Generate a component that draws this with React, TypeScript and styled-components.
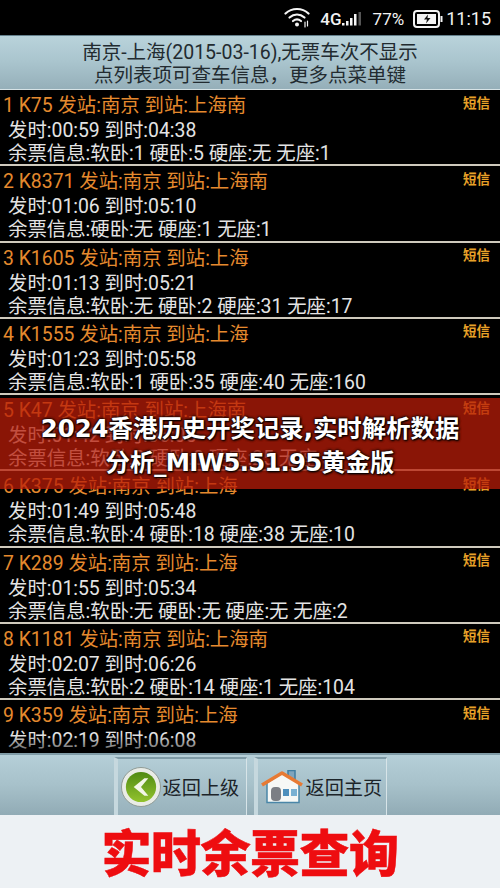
import React from "react";
import styled, { createGlobalStyle } from "styled-components";

const Global = createGlobalStyle`
  html, body { margin: 0; padding: 0; background: #000; }
  #root { width: 500px; height: 888px; overflow: hidden; }
`;
const CJK = `"Roboto", "Noto Sans CJK SC", sans-serif`;

const Page = styled.div`
  position: relative; width: 500px; height: 888px; display: flex; flex-direction: column;
  background: #000; font-family: ${CJK}; overflow: hidden;
`;
const StatusBar = styled.div`
  height: 35px; flex: none; background: #000; color: #f2f2f2; display: flex; align-items: center;
  justify-content: flex-end; padding: 2px 9px 0 0; font-size: 16px; box-sizing: border-box;
`;
const WifiSlot = styled.span`display: flex; margin-top: -3px;`;
const Net = styled.span`font-weight: 500; font-size: 17px; margin-left: 9px; letter-spacing: 0;`;
const Pct = styled.span`margin-left: 10px; margin-right: 9px; font-size: 17px;`;
const Clock = styled.span`font-size: 18px; margin-left: 3px;`;
const Header = styled.div`
  height: 55px; flex: none; box-sizing: border-box; padding-top: 5px; text-align: center; color: #222b30;
  font-size: 19.5px; line-height: 23px;
  background: linear-gradient(180deg, #b9d3db 0%, #a9c4cd 50%, #95afb9 100%);
  border-top: 1px solid #64808c; border-bottom: 1px solid #d7e3e6;
`;
const HeaderLine = styled.div`white-space: nowrap;`;
const List = styled.div`flex: 1; min-height: 0; overflow: hidden; position: relative;
  &::after { content: ""; position: absolute; left: 0; right: 0; bottom: 0; height: 18px;
    background: linear-gradient(180deg, rgba(0,0,0,0), rgba(0,0,0,.65)); }
`;
const Row = styled.div`
  height: 76.25px; box-sizing: border-box; border-bottom: 2px solid #cfcabd; background: #000;
`;
const Title = styled.div`
  display: flex; justify-content: space-between; align-items: center; height: 27px; margin-bottom: 2px; padding: 0 10px 0 3px;
  color: #e58a2e; font-size: 19.4px; white-space: nowrap;
`;
const Sms = styled.span`color: #e8a128; font-size: 13.500px; font-weight: 700; margin-top: -4px;`;
const Info = styled.div`
  color: #e4e4e4; font-size: 19.4px; line-height: 23px; padding-left: 8px; white-space: nowrap;
`;
const Footer = styled.div`
  height: 62px; flex: none; box-sizing: border-box; display: flex; justify-content: center; gap: 7px; padding: 2px 0 0 0;
  background: linear-gradient(180deg, #b5cfd8 0%, #a7c1ca 50%, #91abb5 100%);
  border-top: 2px solid #7f9ba6;
`;
const NavButton = styled.div`
  width: 133px; height: 58px; box-sizing: border-box; display: flex; align-items: center; gap: 2px; padding-left: 3px;
  border: 1px solid #d7e4e8; border-bottom: none; border-top: 2px solid #7f9ba6; border-left: 4px solid #c6d8de;
  background: linear-gradient(180deg, #b3cdd6, #98b2bc);
  color: #1c2429; font-size: 19.200px; white-space: nowrap;
`;
const Ad = styled.div`
  height: 73px; flex: none; background: #edf1f4; color: #ee0d10; display: flex; align-items: center; justify-content: center;
  font-size: 50px; font-weight: 900; letter-spacing: -0.5px; padding-bottom: 4px; box-sizing: border-box;
  -webkit-text-stroke: .5px #ee0d10;
`;
const Banner = styled.div`
  position: absolute; left: 0; right: 0; top: 398px; height: 91px; box-sizing: border-box;
  background: rgba(184, 28, 8, .75); color: #fff; text-align: center; padding: 14px 0 0;
  font-family: "DejaVu Sans", "Noto Sans CJK SC", sans-serif; font-weight: 700; font-size: 24.400px; line-height: 34px;
  text-shadow: 0 0 3px #000, 0 0 3px #000, 1px 1px 2px #000;
`;
const BannerLine = styled.div`white-space: nowrap;`;
const Code = styled.span`letter-spacing: -0.8px;`;

const trains = [
  ["1 K75", "上海南", "00:59", "04:38", "软卧:1 硬卧:5 硬座:无 无座:1"],
  ["2 K8371", "上海南", "01:06", "05:10", "硬卧:无 硬座:1 无座:1"],
  ["3 K1605", "上海", "01:13", "05:21", "软卧:无 硬卧:2 硬座:31 无座:17"],
  ["4 K1555", "上海", "01:23", "05:58", "软卧:1 硬卧:35 硬座:40 无座:160"],
  ["5 K47", "上海南", "01:42", "06:05", "软卧:0 硬卧:0 硬座:25 无座:32"],
  ["6 K375", "上海", "01:49", "05:48", "软卧:4 硬卧:18 硬座:38 无座:10"],
  ["7 K289", "上海", "01:55", "05:34", "软卧:无 硬卧:无 硬座:无 无座:2"],
  ["8 K1181", "上海南", "02:07", "06:26", "软卧:2 硬卧:14 硬座:1 无座:104"],
  ["9 K359", "上海", "02:19", "06:08", "软卧:1 硬卧:8 硬座:5 无座:20"],
];

const Wifi = () => (
  <svg width="27" height="22" viewBox="0 0 27 22" fill="none" stroke="#f4f4f4" strokeLinecap="round">
    <path d="M1.500 7.500C8 1.500 18 1.500 24.500 7.500" strokeWidth="2.200" />
    <path d="M5.500 11.500C10 7.500 16 7.500 20.500 11.500" strokeWidth="2.200" />
    <path d="M9 15C11.500 13 14.500 13 17 15" strokeWidth="2.200" />
    <circle cx="13" cy="18.500" r="2" fill="#f4f4f4" stroke="none" />
    <path d="M21 16v5M23.500 15v5" strokeWidth="1.200" />
  </svg>
);
const Signal = () => (
  <svg width="21" height="14" viewBox="0 0 21 14" fill="#f4f4f4">
    <rect x="0" y="11" width="2.500" height="2.500" />
    <rect x="4" y="9" width="2.500" height="4.500" />
    <rect x="8" y="6" width="2.500" height="7.500" />
    <rect x="12" y="2" width="2.500" height="11.500" />
    <rect x="16.500" y="0" width="2.500" height="13.500" fill="#555" />
  </svg>
);
const Battery = () => (
  <svg width="30" height="18" viewBox="0 0 30 18">
    <rect x="1" y="1" width="25" height="16" rx="3" fill="none" stroke="#f4f4f4" strokeWidth="2" />
    <rect x="4" y="4" width="19" height="10" fill="#f4f4f4" />
    <rect x="27.500" y="6" width="2" height="6" fill="#f4f4f4" />
    <path d="M15 4.500 11 9.500h3l-1 4 4.500-5.500h-3z" fill="#111" />
  </svg>
);
const BackIcon = () => (
  <svg width="40" height="40" viewBox="0 0 41 41">
    <defs>
      <linearGradient id="g" x1="0" y1="0" x2="0" y2="1">
        <stop offset="0" stopColor="#4f8a12" />
        <stop offset="1" stopColor="#93c32e" />
      </linearGradient>
    </defs>
    <circle cx="20.500" cy="20.500" r="20" fill="#e9ece6" stroke="#8f9a94" strokeWidth="1" />
    <circle cx="20.500" cy="20.500" r="15.500" fill="url(#g)" />
    <path d="M24 11.500 13 20.500 24 29.500 28 29.500 20.500 20.500 28 11.500z" fill="#f2f6e6" />
  </svg>
);
const HomeIcon = () => (
  <svg width="43" height="34" viewBox="0 0 43 34">
    <rect x="27" y="0.500" width="7" height="10" fill="#7fa5bd" stroke="#3f7ea3" strokeWidth="1.500" />
    <path d="M6 13v19.500h32V13L21 3z" fill="#f6f8f6" stroke="#4a86a8" strokeWidth="1.500" />
    <path d="M1 15 21 3l20 12" fill="none" stroke="#e77a34" strokeWidth="3.500" strokeLinejoin="round" />
    <rect x="10" y="17" width="10" height="14" rx="4" fill="#7b7f85" />
    <rect x="22" y="19" width="6" height="7" fill="#4d8fbc" />
    <rect x="30" y="19" width="6" height="7" fill="#79b1d3" />
  </svg>
);

export default function App() {
  return (
    <Page>
      <Global />
      <StatusBar>
        <WifiSlot><Wifi /></WifiSlot>
        <Net>4G</Net>
        <Signal />
        <Pct>77%</Pct>
        <Battery />
        <Clock>11:15</Clock>
      </StatusBar>
      <Header>
        <HeaderLine>南京-上海(2015-03-16),无票车次不显示</HeaderLine>
        <HeaderLine>点列表项可查车信息，更多点菜单键</HeaderLine>
      </Header>
      <List>
        {trains.map(([id, to, dep, arr, seats]) => (
          <Row key={id}>
            <Title>
              <span>{id} 发站:南京 到站:{to}</span>
              <Sms>短信</Sms>
            </Title>
            <Info>发时:{dep} 到时:{arr}</Info>
            <Info>余票信息:{seats}</Info>
          </Row>
        ))}
      </List>
      <Footer>
        <NavButton><BackIcon />返回上级</NavButton>
        <NavButton><HomeIcon />返回主页</NavButton>
      </Footer>
      <Ad>实时余票查询</Ad>
      <Banner>
        <BannerLine>2024香港历史开奖记录,实时解析数据</BannerLine>
        <BannerLine>分析<Code>_MIW5.51.95</Code>黄金版</BannerLine>
      </Banner>
    </Page>
  );
}
